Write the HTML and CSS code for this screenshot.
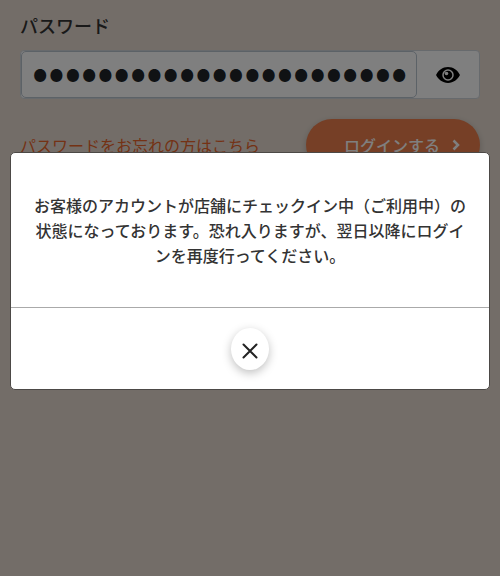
FILE: index.html
```html
<!DOCTYPE html>
<html lang="ja">
<head>
    <meta charset="UTF-8">
    <meta name="viewport" content="width=device-width, initial-scale=1.0">
    <title>ログイン</title>
    <link rel="stylesheet" href="styles.css">
</head>
<body>

<main>
    <form class="login-form">
        <label class="form-label" for="password">パスワード</label>
        <div class="password-group">
            <input class="password-input" type="password" id="password" value="abcdefghijklmnopqrstuvw">
            <button class="toggle-password" type="button" aria-label="パスワードを表示">
                <svg width="24" height="16" viewBox="0 0 24 16">
                    <path fill="#000" d="M12 0C6.5 0 2.4 3.4 0.3 7.4a1.2 1.2 0 0 0 0 1.2C2.4 12.6 6.5 16 12 16s9.6-3.4 11.7-7.4a1.2 1.2 0 0 0 0-1.2C21.6 3.4 17.5 0 12 0z"/>
                    <circle cx="12" cy="8" r="5" fill="#000" stroke="#fff" stroke-width="1.5"/>
                    <circle cx="10.5" cy="6.5" r="1.8" fill="#fff"/>
                </svg>
            </button>
        </div>
        <div class="form-actions">
            <a class="forgot-link" href="#">パスワードをお忘れの方はこちら</a>
            <button class="login-button" type="submit">
                ログインする
                <svg width="8" height="12" viewBox="0 0 8 12">
                    <path d="M1.5 1.5L6 6l-4.5 4.5" fill="none" stroke="#fff" stroke-width="2.5"/>
                </svg>
            </button>
        </div>
    </form>
</main>

<div class="overlay">
    <div class="modal" role="dialog" aria-modal="true" aria-describedby="modal-message">
        <div class="modal-body">
            <p id="modal-message">お客様のアカウントが店舗にチェックイン中（ご利用中）の状態になっております。恐れ入りますが、翌日以降にログインを再度行ってください。</p>
        </div>
        <div class="modal-footer">
            <button class="close-button" type="button" aria-label="閉じる">
                <svg width="16" height="16" viewBox="0 0 16 16">
                    <path d="M1.5 1.5l13 13M14.5 1.5l-13 13" fill="none" stroke="#222" stroke-width="2" stroke-linecap="round"/>
                </svg>
            </button>
        </div>
    </div>
</div>

</body>
</html>
```

FILE: styles.css
```css
* {
    box-sizing: border-box;
}
body {
    font-family: "Noto Sans CJK JP", sans-serif;
    font-size: 16px;
    background-color: #e6dbd1;
    color: #333;
    margin: 0;
    min-height: 100vh;
}
button,
input {
    font-family: inherit;
    font-size: inherit;
}
main {
    padding: 12px 20px;
}
.form-label {
    display: block;
    font-size: 18px;
    font-weight: 500;
    line-height: 26px;
    margin-bottom: 12px;
}
.password-group {
    display: flex;
    height: 49px;
    background-color: #fff;
    border: 1px solid #ced4da;
    border-radius: 4px;
}
.password-input {
    flex: 1;
    min-width: 0;
    padding: 0 10px 12px;
    background-color: #fff;
    border: 1px solid #b9c4cf;
    border-radius: 5px;
    color: #212529;
    font-size: 48px;
    outline: none;
}
.toggle-password {
    display: flex;
    align-items: center;
    justify-content: center;
    width: 62px;
    padding: 0;
    background: none;
    border: none;
}
.form-actions {
    display: flex;
    align-items: center;
    justify-content: space-between;
    margin-top: 20px;
}
.forgot-link {
    color: #e8652b;
    text-decoration: none;
}
.login-button {
    display: flex;
    align-items: center;
    justify-content: flex-end;
    gap: 12px;
    width: 174px;
    height: 52px;
    padding: 0 20px;
    background-color: #ec7e4c;
    border: none;
    border-radius: 26px;
    box-shadow: 0 2px 6px rgba(0, 0, 0, 0.2);
    color: #fff;
    font-weight: 500;
}
.overlay {
    position: fixed;
    top: 0;
    right: 0;
    bottom: 0;
    left: 0;
    padding: 152px 10px 0;
    background-color: rgba(0, 0, 0, 0.5);
}
.modal {
    background-color: #fff;
    border: 1px solid #4c4946;
    border-radius: 5px;
}
.modal-body {
    padding: 40px 20px 39px;
    text-align: center;
}
.modal-body p {
    margin: 0;
    font-weight: 500;
    line-height: 25px;
}
.modal-footer {
    display: flex;
    justify-content: center;
    padding: 20px 20px 19px;
    border-top: 1px solid #aaa;
}
.close-button {
    display: flex;
    align-items: center;
    justify-content: center;
    width: 38px;
    height: 42px;
    padding: 4px 0 0;
    background-color: #fff;
    border: none;
    border-radius: 50%;
    box-shadow: 0 3px 10px rgba(0, 0, 0, 0.25);
}
```
